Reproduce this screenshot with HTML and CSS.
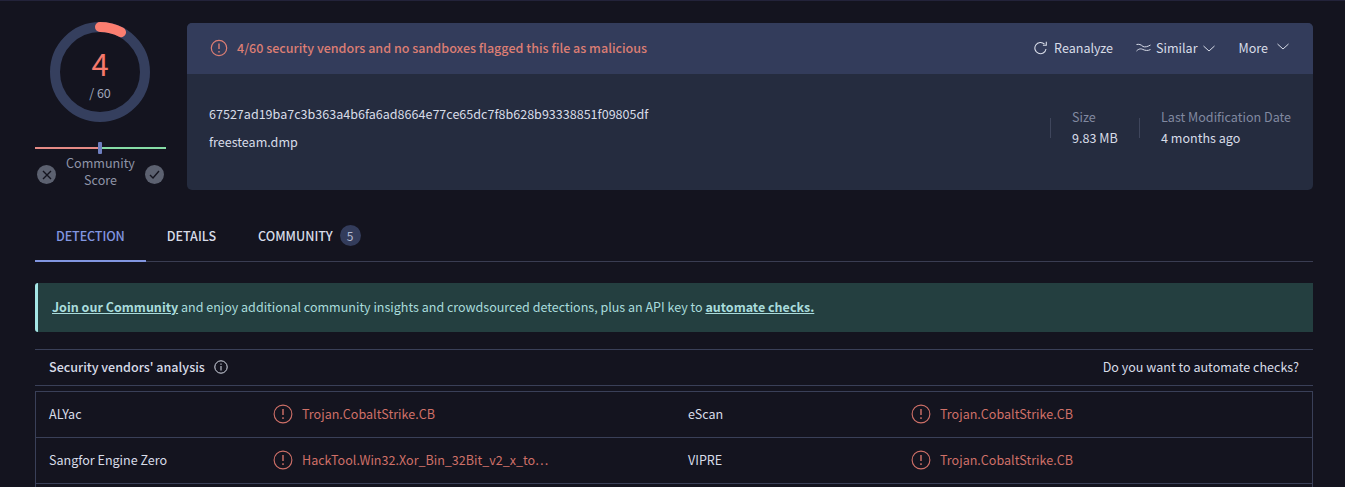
FILE: index.html
```html
<!DOCTYPE html>
<html lang="en">

<head>
    <meta charset="UTF-8">
    <meta name="viewport" content="width=device-width, initial-scale=1.0">
    <title>freesteam.dmp</title>
    <link rel="stylesheet" href="styles.css">
</head>

<body>
    <div class="container">
        <!-- Summary -->
        <div class="summary">
            <div class="score">
                <div class="gauge">
                    <svg class="gauge-ring" width="100" height="100" viewBox="0 0 100 100">
                        <circle cx="50" cy="50" r="45" fill="none" stroke="#353f5e" stroke-width="10"></circle>
                        <path d="M50 5A45 45 0 0 1 71 10.200" fill="none" stroke="#fb7e70" stroke-width="10" stroke-linecap="round"></path>
                    </svg>
                    <div class="gauge-num">4</div>
                    <div class="gauge-total">/ 60</div>
                </div>
                <div class="meter">
                    <span class="meter-bad"></span>
                    <span class="meter-good"></span>
                    <span class="meter-mark"></span>
                </div>
                <div class="vote">
                    <span class="vote-btn">
                        <svg width="10" height="10" viewBox="0 0 10 10" fill="none" stroke="#14141f" stroke-width="1.400"><path d="M1 1l8 8M9 1l-8 8"></path></svg>
                    </span>
                    <span class="vote-label">Community Score</span>
                    <span class="vote-btn">
                        <svg width="11" height="9" viewBox="0 0 11 9" fill="none" stroke="#14141f" stroke-width="1.400"><path d="M1 5l3 3 6-7"></path></svg>
                    </span>
                </div>
            </div>

            <div class="card">
                <div class="card-head">
                    <div class="verdict">
                        <svg class="alert-icon" width="18" height="18" viewBox="0 0 18 18">
                            <circle cx="9" cy="9" r="7.700" fill="none" stroke="currentColor" stroke-width="1.200"></circle>
                            <path d="M9 4.500v5.500M9 12v1.500" fill="none" stroke="currentColor" stroke-width="1.400"></path>
                        </svg>
                        <span>4/60 security vendors and no sandboxes flagged this file as malicious</span>
                    </div>
                    <div class="actions">
                        <span class="action action-reanalyze">
                            <svg width="13" height="14" viewBox="0 0 13 14" fill="none" stroke="currentColor" stroke-width="1.100"><path d="M10.500 3.200A5.600 5.600 0 1 0 12 8"></path><path d="M12.300 .8v3.400h-3.400"></path></svg>
                            Reanalyze
                        </span>
                        <span class="action action-similar">
                            <svg width="15" height="10" viewBox="0 0 15 10" fill="none" stroke="currentColor" stroke-width="1"><path d="M.5 1.500C3 1 5 1.500 7 3.500C9 4.500 12 3.500 14.500 2"></path><path d="M.5 8C3 5.500 5 5.500 7 6.500C9 7.500 12 8 14.500 6.500"></path></svg>
                            Similar
                            <svg class="chev chev-low" width="12" height="7" viewBox="0 0 12 7" fill="none" stroke="currentColor" stroke-width="1"><path d="M.5 1l5.500 5 5.500-5"></path></svg>
                        </span>
                        <span class="action action-more">
                            More
                            <svg class="chev" width="12" height="7" viewBox="0 0 12 7" fill="none" stroke="currentColor" stroke-width="1"><path d="M.5 1l5.500 5 5.500-5"></path></svg>
                        </span>
                    </div>
                </div>
                <div class="card-body">
                    <div class="file">
                        <div>67527ad19ba7c3b363a4b6fa6ad8664e77ce65dc7f8b628b93338851f09805df</div>
                        <div>freesteam.dmp</div>
                    </div>
                    <div class="facts">
                        <span class="fact-sep"></span>
                        <div class="fact fact-size">
                            <div class="fact-label">Size</div>
                            <div>9.83 MB</div>
                        </div>
                        <span class="fact-sep"></span>
                        <div class="fact">
                            <div class="fact-label">Last Modification Date</div>
                            <div>4 months ago</div>
                        </div>
                    </div>
                </div>
            </div>
        </div>

        <!-- Tabs -->
        <div class="tabs">
            <div class="tab tab-active">DETECTION</div>
            <div class="tab">DETAILS</div>
            <div class="tab">COMMUNITY <span class="badge">5</span></div>
        </div>

        <div class="banner">
            <a class="banner-link">Join our Community</a>&nbsp;and enjoy additional community insights and crowdsourced detections, plus an API key to&nbsp;<a class="banner-link">automate checks.</a>
        </div>

        <!-- Vendors -->
        <div class="section-head">
            <div class="section-title">
                Security vendors' analysis
                <svg width="14" height="14" viewBox="0 0 14 14" fill="none" stroke="currentColor" stroke-width="1"><circle cx="7" cy="7" r="6.200"></circle><path d="M7 6v4.500M7 3.500v1.300"></path></svg>
            </div>
            <div>Do you want to automate checks?</div>
        </div>

        <div class="vendors">
            <div class="vendor-row">
                <div>ALYac</div>
                <div class="hit">
                    <svg class="alert-icon" width="20" height="20" viewBox="0 0 18 18"><circle cx="9" cy="9" r="8" fill="none" stroke="currentColor" stroke-width="1"></circle><path d="M9 4.500v5.500M9 12v1.500" fill="none" stroke="currentColor" stroke-width="1.300"></path></svg>
                    <span>Trojan.CobaltStrike.CB</span>
                </div>
                <div>eScan</div>
                <div class="hit">
                    <svg class="alert-icon" width="20" height="20" viewBox="0 0 18 18"><circle cx="9" cy="9" r="8" fill="none" stroke="currentColor" stroke-width="1"></circle><path d="M9 4.500v5.500M9 12v1.500" fill="none" stroke="currentColor" stroke-width="1.300"></path></svg>
                    <span>Trojan.CobaltStrike.CB</span>
                </div>
            </div>
            <div class="vendor-row">
                <div>Sangfor Engine Zero</div>
                <div class="hit">
                    <svg class="alert-icon" width="20" height="20" viewBox="0 0 18 18"><circle cx="9" cy="9" r="8" fill="none" stroke="currentColor" stroke-width="1"></circle><path d="M9 4.500v5.500M9 12v1.500" fill="none" stroke="currentColor" stroke-width="1.300"></path></svg>
                    <span>HackTool.Win32.Xor_Bin_32Bit_v2_x_to…</span>
                </div>
                <div>VIPRE</div>
                <div class="hit">
                    <svg class="alert-icon" width="20" height="20" viewBox="0 0 18 18"><circle cx="9" cy="9" r="8" fill="none" stroke="currentColor" stroke-width="1"></circle><path d="M9 4.500v5.500M9 12v1.500" fill="none" stroke="currentColor" stroke-width="1.300"></path></svg>
                    <span>Trojan.CobaltStrike.CB</span>
                </div>
            </div>
        </div>
    </div>
</body>

</html>
```

FILE: styles.css
```css
html,
body {
    height: 100%;
    overflow: hidden;
}

body {
    margin: 0;
    background: #14141f;
    border-top: 1px solid #23233a;
    box-sizing: border-box;
    color: #d8dce8;
    font-family: "Noto Sans CJK SC", "Noto Sans", sans-serif;
    font-size: 12.55px;
}

.container {
    width: 1278px;
    margin-left: 35px;
}

.summary {
    display: flex;
    gap: 21px;
    padding-top: 22px;
}

.score {
    width: 131px;
}

.gauge {
    position: relative;
    width: 100px;
    height: 100px;
    margin: -1px 0 0 15px;
}

.gauge-ring {
    display: block;
}

.gauge-num {
    position: absolute;
    top: 24px;
    left: 0;
    right: 0;
    text-align: center;
    color: #f5796c;
    font-size: 31px;
    line-height: 34px;
}

.gauge-total {
    position: absolute;
    top: 62px;
    left: 0;
    right: 0;
    text-align: center;
    color: #a0a6ba;
    line-height: 18px;
}

.meter {
    position: relative;
    display: flex;
    margin-top: 25px;
    height: 2px;
}

.meter-bad {
    flex: 1;
    background: #e58a85;
}

.meter-good {
    flex: 1;
    background: #86dca6;
}

.meter-mark {
    position: absolute;
    left: 63px;
    top: -5px;
    width: 4px;
    height: 12px;
    border-radius: 1px;
    background: #6f7fc0;
}

.vote {
    display: flex;
    align-items: flex-start;
    justify-content: space-between;
    padding: 0 2px;
    margin-top: 6px;
}

.vote-btn {
    display: flex;
    align-items: center;
    justify-content: center;
    width: 19px;
    height: 19px;
    margin-top: 10px;
    border-radius: 50%;
    background: #5c6170;
}

.vote-label {
    width: 80px;
    text-align: center;
    color: #8f94a8;
    line-height: 17px;
    margin-top: -1px;
}

.card {
    flex: 1;
    height: 167px;
    border-radius: 5px;
    overflow: hidden;
    background: #252c3f;
}

.card-head {
    display: flex;
    align-items: center;
    justify-content: space-between;
    box-sizing: border-box;
    height: 51px;
    padding: 0 24px 2px 23px;
    background: #333c5b;
}

.verdict {
    display: flex;
    align-items: center;
    gap: 9px;
    color: #dc7e74;
    font-weight: 500;
}

.alert-icon {
    flex: none;
    color: #dc7e74;
}

.actions {
    display: flex;
    align-items: center;
}

.action {
    display: flex;
    align-items: center;
    gap: 5px;
}

.action-reanalyze {
    gap: 7px;
}

.action-similar {
    margin-left: 23px;
}

.action-more {
    margin-left: 24px;
    gap: 9px;
}

.chev {
    margin-top: -2px;
}

.chev-low {
    margin-top: 2px;
}

.card-body {
    display: flex;
    justify-content: space-between;
    padding: 0 22px;
}

.file {
    display: flex;
    flex-direction: column;
    gap: 9px;
    padding-top: 30px;
    line-height: 19px;
}

.facts {
    display: flex;
    align-items: flex-start;
    padding-top: 32px;
}

.fact-sep {
    width: 1px;
    height: 20px;
    margin-top: 12px;
    background: #3f465c;
}

.fact {
    margin-left: 21px;
    line-height: 21px;
}

.fact-size {
    width: 67px;
}

.fact-label {
    color: #8189a0;
}

.tabs {
    display: flex;
    align-items: center;
    height: 48px;
    margin-top: 23px;
    border-bottom: 1px solid #3a3d52;
    font-weight: 500;
}

.tab {
    display: flex;
    align-items: center;
    gap: 7px;
    box-sizing: border-box;
    height: 100%;
    padding: 0 21px 4px;
}

.tab-active {
    color: #8296e0;
    height: 49px;
    margin-bottom: -1px;
    border-bottom: 2px solid #8296e0;
    padding-bottom: 2px;
    letter-spacing: -.1px;
}

.badge {
    display: inline-flex;
    align-items: center;
    justify-content: center;
    width: 21px;
    height: 21px;
    border-radius: 50%;
    background: #333c5b;
    color: #b4bad0;
    font-size: 12px;
    font-weight: 400;
}

.banner {
    display: flex;
    align-items: center;
    box-sizing: border-box;
    height: 49px;
    margin-top: 21px;
    padding: 0 0 2px 14px;
    border-left: 3px solid #a5e6e6;
    border-radius: 3px 0 0 3px;
    background: #243f40;
    color: #a9dcdc;
    font-size: 12.52px;
}

.banner-link {
    font-weight: 700;
    text-decoration: underline;
}

.section-head {
    display: flex;
    align-items: center;
    justify-content: space-between;
    box-sizing: border-box;
    height: 37px;
    margin-top: 17px;
    padding: 0 14px 2px;
    border-top: 1px solid #3a4058;
    border-bottom: 1px solid #3a4058;
}

.section-title {
    display: flex;
    align-items: center;
    gap: 9px;
    font-weight: 500;
}

.vendors {
    box-sizing: border-box;
    height: 96px;
    margin-top: 5px;
    border: 1px solid #3a4058;
    border-bottom: 0;
}

.vendor-row {
    display: grid;
    grid-template-columns: 224px 415px 223px 1fr;
    align-items: center;
    box-sizing: border-box;
    height: 46px;
    padding: 0 0 2px 13px;
    border-bottom: 1px solid #3a4058;
}

.hit {
    display: flex;
    align-items: center;
    gap: 9px;
    color: #cf7068;
}

.hit .alert-icon {
    color: #cf7068;
}
```
